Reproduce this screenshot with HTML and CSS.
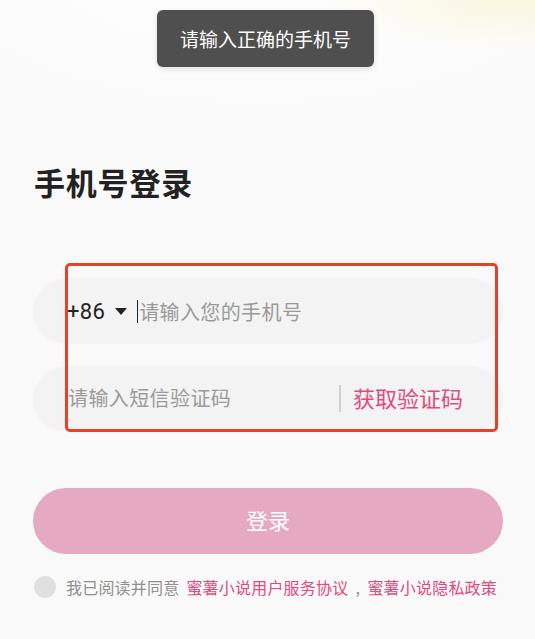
FILE: index.html
```html
<!DOCTYPE html>
<html lang="zh-CN">
<head>
<meta charset="utf-8">
<title>手机号登录</title>
<link rel="stylesheet" href="styles.css">
</head>
<body>
<div class="page">
  <h1 class="title">手机号登录</h1>
  <div class="form">
    <div class="field">
      <span class="code">+86</span>
      <svg class="arrow" width="12" height="7" viewBox="0 0 12 7"><path d="M0 0H12L6 7Z" fill="#222"/></svg>
      <span class="caret"></span>
      <span class="ph">请输入您的手机号</span>
    </div>
    <div class="field field-code">
      <span class="ph">请输入短信验证码</span>
      <span class="divider"></span>
      <span class="get">获取验证码</span>
    </div>
  </div>
  <button class="login">登录</button>
  <div class="agree">
    <span class="check"></span>
    <span class="agree-text">我已阅读并同意<span class="link first">蜜薯小说用户服务协议</span><span class="comma">,</span><span class="link">蜜薯小说隐私政策</span></span>
  </div>
  <div class="highlight"></div>
  <div class="toast">请输入正确的手机号</div>
</div>
</body>
</html>
```
FILE: styles.css
```css
html, body {
  margin: 0;
  padding: 0;
}
body {
  width: 535px;
  height: 639px;
  overflow: hidden;
  font-family: "Noto Sans CJK SC", "Noto Sans", sans-serif;
  background: #f9f9f9;
}
.page {
  position: relative;
  height: 639px;
  padding: 0 32px 0 33px;
  box-sizing: border-box;
  background:
    radial-gradient(ellipse 200px 50px at 520px 0px, rgba(252, 246, 220, 0.9), rgba(252, 246, 220, 0) 100%),
    radial-gradient(ellipse 600px 260px at 260px -40px, rgba(255,255,255,0.9), rgba(255,255,255,0) 100%),
    #f9f9f9;
}
.title {
  margin: 0;
  padding-top: 162px;
  padding-left: 1px;
  font-size: 31px;
  line-height: 40px;
  font-weight: 700;
  color: #222;
  letter-spacing: 0.8px;
}
.form {
  margin-top: 76px;
  display: flex;
  flex-direction: column;
  gap: 22px;
}
.field {
  height: 66px;
  border-radius: 33px;
  background: #f3f3f3;
  display: flex;
  align-items: center;
  padding-left: 34px;
  padding-right: 40px;
}
.code {
  font-family: Roboto, "Liberation Sans", sans-serif;
  font-size: 22px;
  color: #222;
  letter-spacing: 0.3px;
}
.arrow {
  margin-left: 10px;
  margin-top: 1px;
}
.caret {
  width: 1px;
  height: 23px;
  background: #222;
  margin-left: 10px;
}
.ph {
  font-size: 20px;
  letter-spacing: 0.4px;
  color: #9a9a9a;
  margin-left: 1px;
  margin-top: 0;
}
.field-code .ph {
  margin-left: 1px;
  margin-top: -4px;
}
.divider {
  width: 2px;
  height: 27px;
  background: #cfcfcf;
  margin-left: auto;
  margin-top: -1px;
}
.get {
  font-size: 22px;
  color: #e34a7d;
  margin-left: 12px;
  margin-top: -5px;
}
.login {
  display: block;
  width: 470px;
  height: 66px;
  margin-top: 56px;
  border: 0;
  border-radius: 33px;
  background: #e5a9c2;
  color: #fff;
  font-family: "Noto Sans CJK SC", sans-serif;
  font-size: 22px;
  padding: 0 0 4px;
}
.agree {
  margin-top: 21px;
  display: flex;
  align-items: center;
  padding-left: 1px;
}
.check {
  width: 22px;
  height: 22px;
  border-radius: 50%;
  background: #e0e0e0;
  flex: none;
}
.agree-text {
  margin-left: 10px;
  font-size: 16px;
  letter-spacing: 0.2px;
  color: #8f8f8f;
  white-space: nowrap;
}
.link {
  color: #e34a7d;
}
.link.first {
  margin-left: 7px;
}
.comma {
  display: inline-block;
  width: 19px;
  text-align: center;
  color: #8f8f8f;
}
.highlight {
  position: absolute;
  left: 65px;
  top: 263px;
  width: 427px;
  height: 163px;
  border: 3px solid #e8402a;
  border-radius: 5px;
}
.toast {
  position: absolute;
  left: 157px;
  top: 10px;
  width: 217px;
  height: 57px;
  border-radius: 6px;
  background: #4f4f4f;
  color: #fff;
  font-size: 19px;
  display: flex;
  align-items: center;
  justify-content: center;
  box-shadow: 0 2px 6px rgba(0,0,0,0.12);
}
```
